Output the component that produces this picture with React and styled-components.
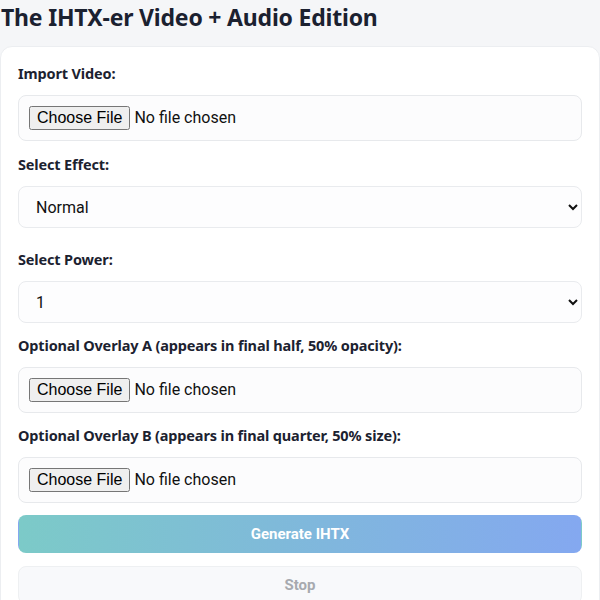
import React from "react";
import styled, { createGlobalStyle } from "styled-components";

const Global = createGlobalStyle`
  html, body { margin: 0; padding: 0; background: #f5f6f8; }
  body { font-family: "Noto Sans", "Liberation Sans", sans-serif; color: #1c2230; overflow: hidden; }
  * { box-sizing: border-box; }
`;

const Page = styled.div`
  display: flex;
  flex-direction: column;
  width: 600px;
`;

const Title = styled.h1`
  margin: 0;
  padding: 0 0 0 1px;
  height: 46px;
  font-family: "Noto Sans", sans-serif;
  font-size: 23px;
  line-height: 34px;
  font-weight: 700;
  letter-spacing: -0.2px;
  color: #1b2130;
  white-space: nowrap;
`;

const Card = styled.div`
  display: flex;
  flex-direction: column;
  background: #ffffff;
  border: 1px solid #eceef1;
  border-radius: 12px;
  padding: 16px 17px 40px 17px;
  width: 600px;
`;

const Field = styled.div`
  display: flex;
  flex-direction: column;
  margin-bottom: ${(p) => p.$after || 12}px;
`;

const Label = styled.label`
  font-family: "Noto Sans", sans-serif;
  font-size: 14.5px;
  font-weight: 700;
  line-height: 20px;
  letter-spacing: -0.15px;
  color: #1c2230;
  margin-bottom: 12px;
  white-space: nowrap;
`;

const FileInput = styled.input`
  width: 100%;
  height: 46px;
  padding: 10px;
  border: 1px solid #e7e9ec;
  border-radius: 8px;
  background: #fcfcfd;
  font-family: Roboto, "Liberation Sans", sans-serif;
  font-size: 16px;
  color: #111;
`;

const Select = styled.select`
  width: 100%;
  height: 42px;
  padding: 0 6px 0 13px;
  border: 1px solid #e9ebee;
  border-radius: 8px;
  background: #fdfdfe;
  font-family: Roboto, "Liberation Sans", sans-serif;
  font-size: 16px;
  color: #111;
`;

const Button = styled.button`
  width: 100%;
  height: 38px;
  border-radius: 8px;
  font-family: Roboto, "Liberation Sans", sans-serif;
  font-size: 15px;
  font-weight: 700;
  margin-bottom: 13px;
  border: 1px solid ${(p) => (p.$primary ? "transparent" : "#eef0f2")};
  background: ${(p) =>
    p.$primary ? "linear-gradient(90deg, #7ccac8 0%, #7fbad9 45%, #84a8f0 100%)" : "#f8f9fb"};
  color: ${(p) => (p.$primary ? "#ffffff" : "#a7aaaf")};
  cursor: default;
`;

export default function App() {
  return (
    <>
      <Global />
      <Page>
        <Title>The IHTX-er Video + Audio Edition</Title>
        <Card>
          <Field $after={13}>
            <Label>Import Video:</Label>
            <FileInput type="file" />
          </Field>
          <Field $after={21}>
            <Label>Select Effect:</Label>
            <Select defaultValue="normal">
              <option value="normal">Normal</option>
            </Select>
          </Field>
          <Field $after={12}>
            <Label>Select Power:</Label>
            <Select defaultValue="1">
              <option value="1">1</option>
            </Select>
          </Field>
          <Field>
            <Label>Optional Overlay A (appears in final half, 50% opacity):</Label>
            <FileInput type="file" />
          </Field>
          <Field>
            <Label>Optional Overlay B (appears in final quarter, 50% size):</Label>
            <FileInput type="file" />
          </Field>
          <Button $primary disabled>Generate IHTX</Button>
          <Button disabled>Stop</Button>
        </Card>
      </Page>
    </>
  );
}
